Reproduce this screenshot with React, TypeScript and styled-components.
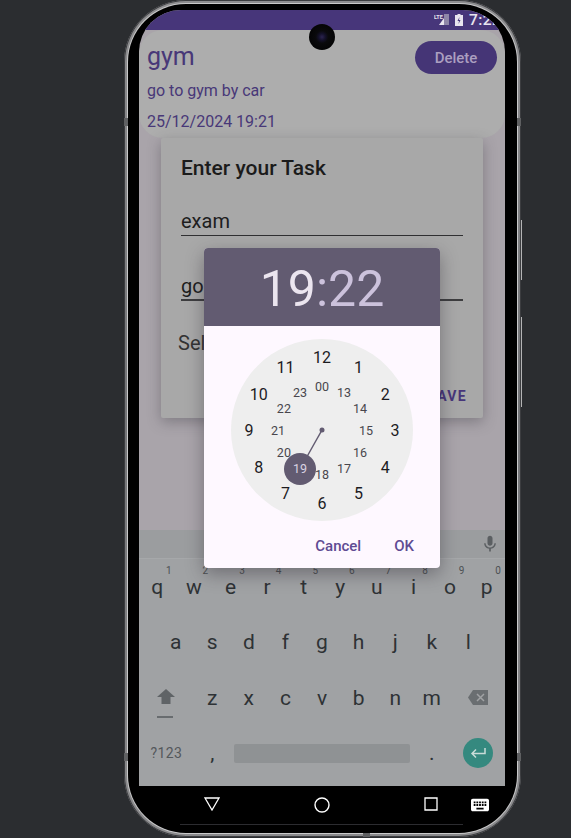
import React from 'react'
import styled, { createGlobalStyle } from 'styled-components'

interface IClockMark {
  label: string
  angle: number
  inner?: boolean
}

const CLOCK_CENTER = 91
const OUTER_RADIUS = 73
const INNER_RADIUS = 44

const outerMarks = ['12', '1', '2', '3', '4', '5', '6', '7', '8', '9', '10', '11']
const innerMarks = ['00', '13', '14', '15', '16', '17', '18', '19', '20', '21', '22', '23']

const keyRows = {
  top: ['q', 'w', 'e', 'r', 't', 'y', 'u', 'i', 'o', 'p'],
  middle: ['a', 's', 'd', 'f', 'g', 'h', 'j', 'k', 'l'],
  bottom: ['z', 'x', 'c', 'v', 'b', 'n', 'm'],
}

const GlobalStyle = createGlobalStyle`
  html, body {
    margin: 0;
    padding: 0;
    background: #2b2d30;
    font-family: Roboto, "Liberation Sans", sans-serif;
  }
`

const Page = styled.div`
  width: 571px;
  height: 838px;
  overflow: hidden;
  background: #2b2d30;
`

const Device = styled.div`
  position: relative;
  box-sizing: border-box;
  width: 397px;
  height: 837px;
  margin-left: 124px;
  padding: 4px 4px 4px 4px;
  border-radius: 62px;
  background: linear-gradient(180deg, #8e8e90 0%, #737477 50%, #8a8a8c 100%);
  box-shadow: inset 0 0 0 1px #3c3d40;
`

const SideButton = styled.div<{ $top: number; $height: number }>`
  position: absolute;
  right: -1px;
  top: ${({ $top }) => $top}px;
  width: 1px;
  height: ${({ $height }) => $height}px;
  background: #b4b4b5;
`

const EdgeNotch = styled.div<{ $top: number; $side: 'left' | 'right' }>`
  position: absolute;
  ${({ $side }) => $side}: 0;
  top: ${({ $top }) => $top}px;
  width: 4px;
  height: 8px;
  background: #5f6062;
`

const BottomNotch = styled.div`
  position: absolute;
  left: 239px;
  bottom: 0;
  width: 7px;
  height: 4px;
  background: #5f6062;
`

const Bezel = styled.div`
  box-sizing: border-box;
  display: flex;
  flex-direction: column;
  height: 100%;
  padding: 6px 12px 0 11px;
  border-radius: 58px;
  background: #000;
  box-shadow: 0 0 0 1px #c9c9ca;
`

const Screen = styled.div`
  position: relative;
  display: flex;
  flex-direction: column;
  height: 776px;
  overflow: hidden;
  border-radius: 42px 42px 0 0;
  background: #a9a4aa;
`

const StatusBar = styled.div`
  flex: none;
  display: flex;
  align-items: center;
  justify-content: flex-end;
  height: 20px;
  background: #47367a;
`

const StatusIcons = styled.div`
  display: flex;
  align-items: center;
  gap: 6px;
  color: #e8e4ee;
`

const Clock = styled.span`
  width: 36px;
  font-size: 15.5px;
  font-weight: 500;
  letter-spacing: 0.4px;
`

const Camera = styled.div`
  position: absolute;
  left: 170px;
  top: 14px;
  width: 26px;
  height: 26px;
  border-radius: 50%;
  background: radial-gradient(circle, #2c2450 0, #14112a 18%, #0a0a0c 34%, #000 100%);
`

const TaskCard = styled.div`
  flex: none;
  box-sizing: border-box;
  height: 108px;
  padding: 11px 8px 0;
  border-radius: 24px;
  background: #adadad;
  color: #483878;
`

const TaskHeader = styled.div`
  display: flex;
  align-items: center;
  justify-content: space-between;
`

const TaskTitle = styled.div`
  margin-top: -2px;
  font-size: 25px;
  line-height: 31px;
`

const DeleteButton = styled.div`
  display: flex;
  align-items: center;
  justify-content: center;
  width: 82px;
  height: 33px;
  border-radius: 17px;
  background: #453576;
  color: #ab9fc0;
  font-size: 15px;
  font-weight: 500;
`

const TaskLine = styled.div<{ $gap: number }>`
  margin-top: ${({ $gap }) => $gap}px;
  font-size: 16px;
  line-height: 20px;
`

const KeyboardSpacer = styled.div`
  flex: 1;
`

const Keyboard = styled.div`
  flex: none;
  height: 256px;
  background: #a0a2a4;
  color: #2e3235;
`

const Suggestions = styled.div`
  display: flex;
  align-items: center;
  justify-content: flex-end;
  box-sizing: border-box;
  height: 29px;
  padding-right: 5px;
  border-bottom: 1px solid #a6a8aa;
  background: #9b9d9f;
  color: #5b5f62;
`

const KeyRow = styled.div`
  display: flex;
  justify-content: center;
  align-items: center;
  height: 55.5px;
`

const Key = styled.div<{ $units?: number }>`
  position: relative;
  display: flex;
  align-items: center;
  justify-content: center;
  width: ${({ $units = 1 }) => $units * 36.6}px;
  height: 100%;
  font-size: 21px;
`

const KeyHint = styled.span`
  position: absolute;
  top: 6px;
  right: 4px;
  font-size: 10px;
  color: #4c5053;
`

const SymbolsLabel = styled.span`
  font-size: 14px;
  letter-spacing: 0.4px;
  color: #54585b;
`

const ShiftIcon = styled.svg`
  margin-bottom: 3px;
`

const ShiftBar = styled.span`
  position: absolute;
  left: 18px;
  top: 46px;
  width: 16px;
  height: 2px;
  background: #686c6f;
`

const SpaceBar = styled.div`
  width: 176px;
  height: 19px;
  border-radius: 2px;
  background: #8f9294;
`

const EnterCircle = styled.div`
  display: flex;
  align-items: center;
  justify-content: center;
  width: 30px;
  height: 30px;
  border-radius: 50%;
  background: #35897f;
`

const NavBar = styled.div`
  position: relative;
  flex: 1;
  display: flex;
  align-items: flex-start;
  padding: 11px 0 0 65px;
`

const NavIcon = styled.svg<{ $gap?: number }>`
  flex: none;
  margin-left: ${({ $gap = 0 }) => $gap}px;
`

const HomeLine = styled.div`
  position: absolute;
  left: 41px;
  right: 42px;
  bottom: 8px;
  height: 1px;
  background: #2c2c30;
`

const TaskDialog = styled.div`
  position: absolute;
  left: 22px;
  top: 128px;
  box-sizing: border-box;
  width: 322px;
  height: 280px;
  padding: 18px 20px 0;
  border-radius: 2px;
  background: #a8a8a8;
  box-shadow: 0 4px 14px rgba(50, 45, 55, 0.35);
`

const DialogTitle = styled.div`
  font-size: 21px;
  font-weight: 500;
  line-height: 24px;
  color: #1b1b1b;
`

const Field = styled.div<{ $top: number; $strong?: boolean }>`
  box-sizing: border-box;
  height: 28px;
  margin-top: ${({ $top }) => $top}px;
  border-bottom: ${({ $strong }) => ($strong ? '2px solid #3d3d3f' : '1px solid #303032')};
  font-size: 20px;
  line-height: 26px;
  color: #1e1e1e;
`

const SelectLabel = styled.div`
  margin: 30px 0 0 -3px;
  font-size: 20px;
  line-height: 24px;
  color: #333;
`

const SaveAction = styled.div`
  margin: 33px -4px 0 0;
  font-size: 14px;
  font-weight: 700;
  line-height: 16px;
  letter-spacing: 1.3px;
  text-align: right;
  color: #47367a;
`

const TimePicker = styled.div`
  position: absolute;
  left: 65px;
  top: 238px;
  width: 236px;
  height: 320px;
  overflow: hidden;
  border-radius: 4px;
  background: #fef8ff;
  box-shadow: 0 6px 18px rgba(40, 35, 45, 0.4);
`

const TimeHeader = styled.div`
  box-sizing: border-box;
  display: flex;
  align-items: center;
  justify-content: center;
  height: 78px;
  padding-top: 4px;
  background: #625b71;
  font-size: 50px;
  color: #ccc2dc;
`

const Hours = styled.span`
  color: #ebe5ef;
`

const ClockFace = styled.div`
  position: relative;
  width: 182px;
  height: 182px;
  margin: 13px auto 0;
  border-radius: 50%;
  background: #eeeeee;
`

const ClockMark = styled.span<{ $inner?: boolean; $selected?: boolean }>`
  position: absolute;
  transform: translate(-50%, -44%);
  font-size: ${({ $inner }) => ($inner ? 12.5 : 16)}px;
  line-height: 1;
  color: ${({ $inner, $selected }) => ($selected ? '#d9d2e2' : $inner ? '#48464d' : '#1c1b1f')};
`

const HandLayer = styled.svg`
  position: absolute;
  left: 0;
  top: 0;
`

const PickerActions = styled.div`
  display: flex;
  justify-content: flex-end;
  gap: 33px;
  padding: 17px 26px 0 0;
  font-size: 15px;
  font-weight: 500;
  line-height: 16px;
  color: #5f4b93;
`

function polar(angle: number, radius: number) {
  const rad = (angle * Math.PI) / 180
  return {
    left: CLOCK_CENTER + radius * Math.sin(rad),
    top: CLOCK_CENTER - radius * Math.cos(rad),
  }
}

const marks: IClockMark[] = [
  ...outerMarks.map((label, i) => ({ label, angle: i * 30 })),
  ...innerMarks.map((label, i) => ({ label, angle: i * 30, inner: true })),
]

export default function App() {
  return (
    <Page>
      <GlobalStyle />
      <Device>
        <SideButton $top={220} $height={60} />
        <SideButton $top={317} $height={90} />
        <EdgeNotch $side="left" $top={118} />
        <EdgeNotch $side="right" $top={118} />
        <EdgeNotch $side="left" $top={753} />
        <EdgeNotch $side="right" $top={753} />
        <BottomNotch />
        <Bezel>
          <Screen>
            <StatusBar>
              <StatusIcons>
                <svg width="15" height="12" viewBox="0 0 15 12">
                  <text x="0" y="5" fontSize="5.5" fontFamily="Roboto" fontWeight="700" fill="#e8e4ee">
                    LTE
                  </text>
                  <path d="M10 0h5v11h-5z" fill="#8f86a8" />
                  <path d="M10 4v7H5z" fill="#e8e4ee" />
                </svg>
                <svg width="8" height="12" viewBox="0 0 8 12">
                  <path d="M2.500 0h3v1H8v11H0V1h2.500z" fill="#e8e4ee" />
                  <path d="M4.500 3 2.500 7h1.500l-.5 3 2-4H4z" fill="#47367a" />
                </svg>
                <Clock>7:22</Clock>
              </StatusIcons>
            </StatusBar>
            <TaskCard>
              <TaskHeader>
                <TaskTitle>gym</TaskTitle>
                <DeleteButton>Delete</DeleteButton>
              </TaskHeader>
              <TaskLine $gap={7}>go to gym by car</TaskLine>
              <TaskLine $gap={11}>25/12/2024 19:21</TaskLine>
            </TaskCard>
            <KeyboardSpacer />
            <Keyboard>
              <Suggestions>
                <svg width="20" height="20" viewBox="0 0 24 24" fill="currentColor">
                  <path d="M12 14c1.660 0 3-1.340 3-3V5c0-1.660-1.340-3-3-3S9 3.340 9 5v6c0 1.660 1.340 3 3 3zm5.300-3c0 3-2.540 5.100-5.300 5.100S6.700 14 6.700 11H5c0 3.410 2.720 6.230 6 6.720V21h2v-3.280c3.280-.48 6-3.300 6-6.720h-1.700z" />
                </svg>
              </Suggestions>
              <KeyRow>
                {keyRows.top.map((k, i) => (
                  <Key key={k}>
                    <KeyHint>{(i + 1) % 10}</KeyHint>
                    {k}
                  </Key>
                ))}
              </KeyRow>
              <KeyRow>
                {keyRows.middle.map((k) => (
                  <Key key={k}>{k}</Key>
                ))}
              </KeyRow>
              <KeyRow>
                <Key $units={1.5}>
                  <ShiftIcon width="18" height="15" viewBox="0 0 18 15">
                    <path d="M9 0 18 8h-4.500v7h-9V8H0z" fill="#5f6366" />
                  </ShiftIcon>
                  <ShiftBar />
                </Key>
                {keyRows.bottom.map((k) => (
                  <Key key={k}>{k}</Key>
                ))}
                <Key $units={1.5}>
                  <svg width="20" height="15" viewBox="0 0 20 15">
                    <path d="M5 0h15v15H5L0 7.500z" fill="#6a6e71" />
                    <path d="m9 4 7 7m0-7-7 7" stroke="#a0a2a4" strokeWidth="1.500" />
                  </svg>
                </Key>
              </KeyRow>
              <KeyRow>
                <Key $units={1.5}>
                  <SymbolsLabel>?123</SymbolsLabel>
                </Key>
                <Key>,</Key>
                <Key $units={5}>
                  <SpaceBar />
                </Key>
                <Key>.</Key>
                <Key $units={1.5}>
                  <EnterCircle>
                    <svg width="16" height="12" viewBox="0 0 16 12" fill="none" stroke="#c9dcd8" strokeWidth="1.500">
                      <path d="M15 1v5.500H2M6 2.500l-4 4 4 4" />
                    </svg>
                  </EnterCircle>
                </Key>
              </KeyRow>
            </Keyboard>
            <Camera />
            <TaskDialog>
              <DialogTitle>Enter your Task</DialogTitle>
              <Field $top={28}>exam</Field>
              <Field $top={37} $strong>
                go
              </Field>
              <SelectLabel>Select</SelectLabel>
              <SaveAction>SAVE</SaveAction>
            </TaskDialog>
            <TimePicker>
              <TimeHeader>
                <Hours>19</Hours>:22
              </TimeHeader>
              <ClockFace>
                <HandLayer width="182" height="182" viewBox="0 0 182 182">
                  <line x1="91" y1="91" x2="69" y2="130" stroke="#625b71" strokeWidth="1.5" />
                  <circle cx="91" cy="91" r="2.500" fill="#625b71" />
                  <circle cx="69" cy="130" r="16" fill="#625b71" />
                </HandLayer>
                {marks.map(({ label, angle, inner }) => (
                  <ClockMark
                    key={label}
                    $inner={inner}
                    $selected={label === '19'}
                    style={polar(angle, inner ? INNER_RADIUS : OUTER_RADIUS)}
                  >
                    {label}
                  </ClockMark>
                ))}
              </ClockFace>
              <PickerActions>
                <span>Cancel</span>
                <span>OK</span>
              </PickerActions>
            </TimePicker>
          </Screen>
          <NavBar>
            <NavIcon width="16" height="14" viewBox="0 0 16 14" fill="none" stroke="#fff" strokeWidth="1.300">
              <path d="M1 1h14L8 13z" />
            </NavIcon>
            <NavIcon $gap={94} width="16" height="16" viewBox="0 0 16 16" fill="none" stroke="#fff" strokeWidth="1.400">
              <circle cx="8" cy="8" r="7" />
            </NavIcon>
            <NavIcon $gap={94} width="14" height="14" viewBox="0 0 14 14" fill="none" stroke="#fff" strokeWidth="1.300">
              <path d="M1 1h12v12H1z" />
            </NavIcon>
            <NavIcon $gap={33} width="18" height="16" viewBox="2 4 20 16" fill="#fff">
              <path d="M20 5H4c-1.100 0-1.990.9-1.990 2L2 17c0 1.100.9 2 2 2h16c1.100 0 2-.9 2-2V7c0-1.100-.9-2-2-2zm-9 3h2v2h-2V8zm0 3h2v2h-2v-2zM8 8h2v2H8V8zm0 3h2v2H8v-2zm-1 2H5v-2h2v2zm0-3H5V8h2v2zm9 7H8v-2h8v2zm0-4h-2v-2h2v2zm0-3h-2V8h2v2zm3 3h-2v-2h2v2zm0-3h-2V8h2v2z" />
            </NavIcon>
            <HomeLine />
          </NavBar>
        </Bezel>
      </Device>
    </Page>
  )
}
